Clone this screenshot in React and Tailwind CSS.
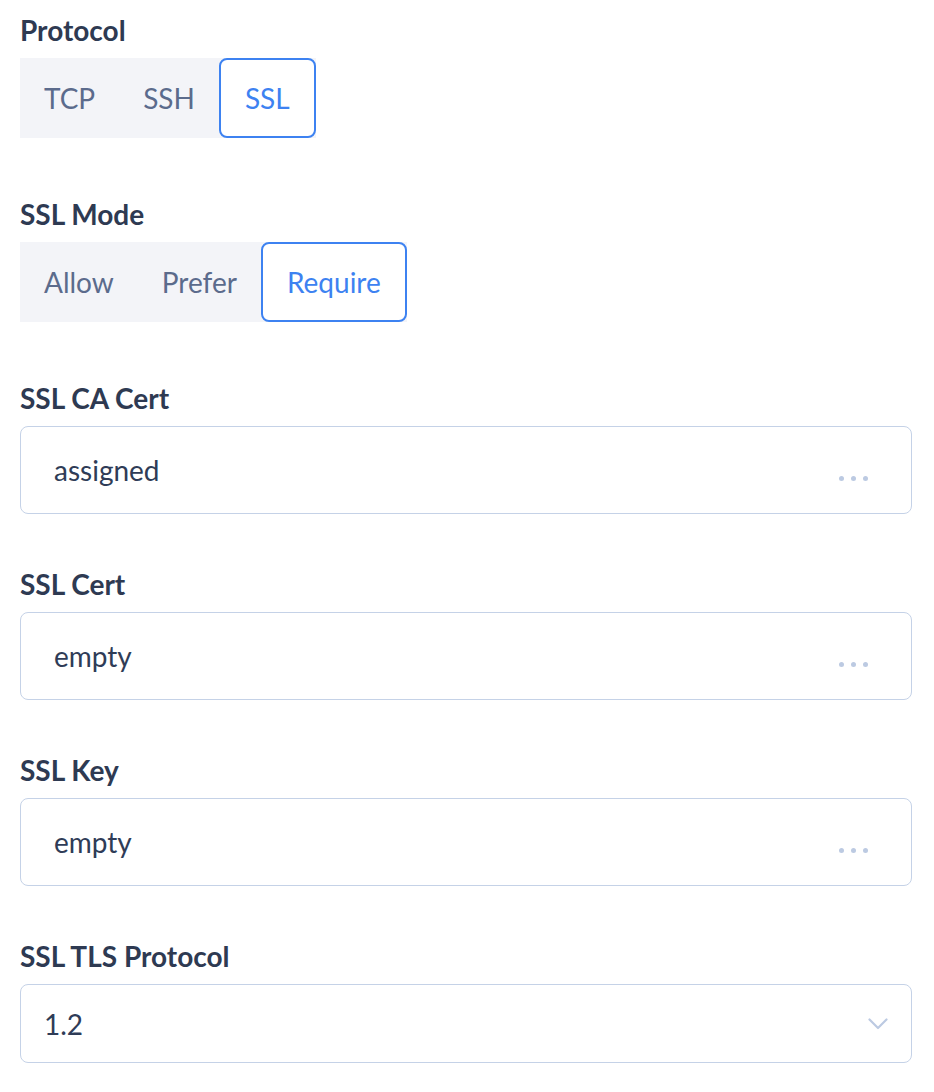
import React, { useState } from "react";

function Segmented({ options, value, onChange }) {
    return (
        <div className="flex h-[80px] w-fit bg-[#f3f4f8]">
            {options.map(opt => (
                <button key={opt}
                    className={"flex items-center border-2 rounded-lg text-[28px] leading-none " +
                        (opt === value ? "px-[24px] bg-white border-[#3d82f1] text-[#3d82f1]" : "px-[22px] border-transparent text-[#5b6b8c]")}
                    onClick={() => onChange(opt)}>
                    {opt}
                </button>
            ))}
        </div>
    );
}

function FileField({ value }) {
    return (
        <div className="flex h-[88px] items-center justify-between border border-[#c5d2e7] rounded-lg bg-white pl-[33px] pr-[43px]">
            <span className="text-[28px] text-[#2f3c57]">{value}</span>
            <div className="flex items-center gap-[7px] pt-[16px]">
                <span className="w-[5px] h-[5px] rounded-full bg-[#bccae2]"></span>
                <span className="w-[5px] h-[5px] rounded-full bg-[#bccae2]"></span>
                <span className="w-[5px] h-[5px] rounded-full bg-[#bccae2]"></span>
            </div>
        </div>
    );
}

function Label({ children }) {
    return <label className="block text-[28px] leading-[40px] font-bold text-[#2e3a52] mb-2">{children}</label>
}

export default function App() {
    const [protocol, setProtocol] = useState("SSL")
    const [mode, setMode] = useState("Require")

    return (
        <div className="w-[934px] min-h-[1092px] bg-white pt-[10px] pl-[20px] pr-[22px]" style={{ fontFamily: "Lato, 'Open Sans', sans-serif" }}>
            <div>
                <Label>Protocol</Label>
                <Segmented options={["TCP", "SSH", "SSL"]} value={protocol} onChange={setProtocol} />
            </div>

            <div className="mt-[56px]">
                <Label>SSL Mode</Label>
                <Segmented options={["Allow", "Prefer", "Require"]} value={mode} onChange={setMode} />
            </div>

            <div className="mt-[56px]">
                <Label>SSL CA Cert</Label>
                <FileField value="assigned" />
            </div>

            <div className="mt-[50px]">
                <Label>SSL Cert</Label>
                <FileField value="empty" />
            </div>

            <div className="mt-[50px]">
                <Label>SSL Key</Label>
                <FileField value="empty" />
            </div>

            <div className="mt-[50px]">
                <Label>SSL TLS Protocol</Label>
                <div className="flex h-[79px] items-center justify-between border border-[#c5d2e7] rounded-lg bg-white pl-[23px] pr-[23px]">
                    <span className="text-[28px] text-[#2f3c57]">1.2</span>
                    <svg width="20" height="12" viewBox="0 0 20 12" fill="none">
                        <polyline points="1.5,1.5 10,10 18.5,1.5" stroke="#bccae2" strokeWidth="2.2" strokeLinecap="round" strokeLinejoin="round" />
                    </svg>
                </div>
            </div>
        </div>
    );
}
